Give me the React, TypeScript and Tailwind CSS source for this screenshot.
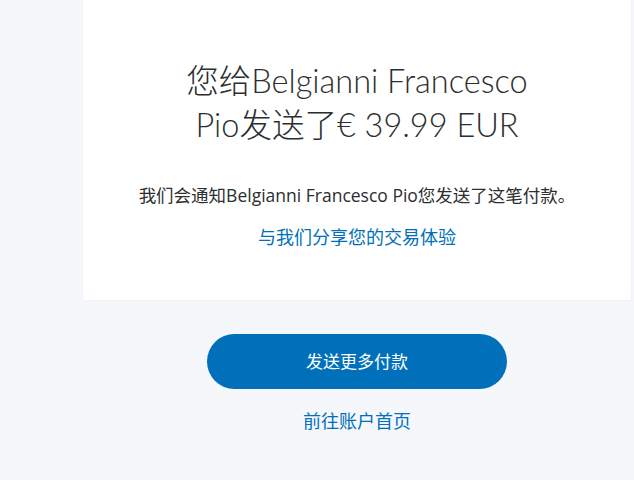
export default function App() {
  const font = { fontFamily: '"Lato", "Noto Sans CJK SC", sans-serif' };
  const bodyFont = { fontFamily: '"Open Sans", "Noto Sans CJK SC", sans-serif' };

  return (
    <div
      className="w-[634px] h-[480px] overflow-hidden bg-[#f5f7fa] text-[#2c2e2f]"
      style={font}
    >
      <div className="ml-[83px] w-[548px] bg-white shadow-[0_0_1px_rgba(0,0,0,0.12)] pt-[59px] pb-[51px] flex flex-col items-center text-center">
        <h1 className="text-[32.5px] leading-[44px] font-light">
          您给Belgianni Francesco
          <br />
          Pio发送了€ 39.99 EUR
        </h1>
        <p className="mt-[36px] text-[17.5px] leading-6" style={bodyFont}>
          我们会通知Belgianni Francesco Pio您发送了这笔付款。
        </p>
        <a href="#" className="mt-[18px] text-[18px] leading-6 text-[#0070ba]">
          与我们分享您的交易体验
        </a>
      </div>

      <div className="ml-[83px] w-[548px] flex flex-col items-center">
        <button className="mt-[34px] w-[300px] h-[55px] rounded-full bg-[#0070ba] text-white text-[17px]">
          发送更多付款
        </button>
        <a href="#" className="mt-[20px] text-[18px] leading-6 text-[#0070ba]">
          前往账户首页
        </a>
      </div>
    </div>
  );
}
